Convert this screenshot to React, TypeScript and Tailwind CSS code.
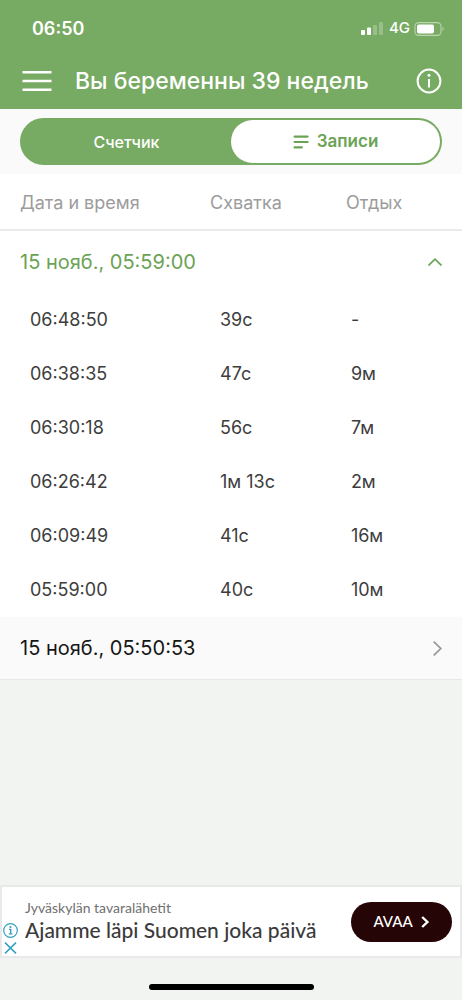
import { useState } from "react";
import clsx from "clsx";

interface Contraction {
  time: string;
  duration: string;
  rest: string;
}

interface Session {
  title: string;
  contractions: Contraction[];
}

const SESSIONS: Session[] = [
  {
    title: "15 нояб., 05:59:00",
    contractions: [
      { time: "06:48:50", duration: "39с", rest: "-" },
      { time: "06:38:35", duration: "47с", rest: "9м" },
      { time: "06:30:18", duration: "56с", rest: "7м" },
      { time: "06:26:42", duration: "1м 13с", rest: "2м" },
      { time: "06:09:49", duration: "41с", rest: "16м" },
      { time: "05:59:00", duration: "40с", rest: "10м" },
    ],
  },
  { title: "15 нояб., 05:50:53", contractions: [] },
];

function StatusBar() {
  return (
    <div className="flex h-14 items-center justify-between pl-8 pr-[18px] pt-px text-white">
      <span className="text-lg font-semibold">06:50</span>
      <div className="flex items-center gap-1">
        <svg width="22" height="13" viewBox="0 0 22 13" fill="currentColor">
          <rect x="0" y="8" width="4" height="5" rx="1" />
          <rect x="6" y="5.5" width="4" height="7.5" rx="1" />
          <rect x="12" y="3" width="4" height="10" rx="1" opacity="0.25" />
          <rect x="18" y="0" width="4" height="13" rx="1" opacity="0.25" />
        </svg>
        <span className="ml-0.5 text-[15px] font-medium">4G</span>
        <svg width="30" height="14" viewBox="0 0 30 14" fill="none">
          <rect x="1" y="0.6" width="26" height="12.8" rx="3.6" stroke="white" strokeWidth="1.1" opacity="0.5" />
          <rect x="3" y="2.5" width="17" height="9" rx="1.8" fill="white" />
          <path d="M28.6 4.8c1.4.6 1.4 3.8 0 4.4z" fill="white" opacity="0.5" />
        </svg>
      </div>
    </div>
  );
}

function Header() {
  return (
    <header className="bg-[#77aa62]">
      <StatusBar />
      <div className="flex h-[53px] items-center px-5 pb-1 text-white">
        <button type="button" aria-label="Меню" className="w-8">
          <svg width="32" height="22" viewBox="0 0 32 22" stroke="currentColor" strokeWidth="2.6">
            <path d="M2.5 2.3h29M2.5 11h29M2.5 19.7h29" />
          </svg>
        </button>
        <h1 className="ml-[23px] flex-1 whitespace-nowrap text-[23px] font-medium leading-8">
          Вы беременны 39 недель
        </h1>
        <button type="button" aria-label="Информация">
          <svg width="26" height="26" viewBox="0 0 26 26" fill="none" stroke="currentColor">
            <circle cx="13" cy="13" r="11.4" strokeWidth="2" />
            <path d="M13 11v8.6" strokeWidth="2" />
            <circle cx="13" cy="7.2" r="1.5" fill="currentColor" stroke="none" />
          </svg>
        </button>
      </div>
    </header>
  );
}

function Tabs() {
  return (
    <nav className="bg-[#fafafb] px-5 py-[9px]">
      <div className="flex h-[47px] rounded-full bg-[#77aa62] p-0.5">
        <button type="button" className="flex-1 text-base font-medium text-white">
          Счетчик
        </button>
        <button
          type="button"
          className="flex flex-1 items-center justify-center gap-2 rounded-full bg-white text-[17px] font-semibold text-[#6ba356]"
        >
          <svg width="16" height="14" viewBox="0 0 16 14" stroke="currentColor" strokeWidth="2.2" strokeLinecap="round">
            <path d="M1.6 1.6h13M1.6 7h13M1.6 12.4h7.2" />
          </svg>
          Записи
        </button>
      </div>
    </nav>
  );
}

function SessionRows({ session, initiallyOpen }: { session: Session; initiallyOpen: boolean }) {
  const [open, setOpen] = useState(initiallyOpen);

  return (
    <tbody className={clsx(open ? "bg-white" : "border-b border-[#e6e9e6] bg-[#fafafa]")}>
      <tr>
        <td colSpan={3}>
          <button
            type="button"
            aria-expanded={open}
            onClick={() => setOpen((o) => !o)}
            className={clsx(
              "flex h-[62px] w-full items-center justify-between px-5 text-xl",
              open ? "text-[#6ba356]" : "text-[#161616]",
            )}
          >
            {session.title}
            {open ? (
              <svg width="14" height="8" viewBox="0 0 14 8" fill="none" stroke="currentColor" strokeWidth="1.7">
                <path d="M0.5 7.5L7 1.2l6.5 6.3" />
              </svg>
            ) : (
              <svg width="9" height="15" viewBox="0 0 9 15" fill="none" stroke="#969696" strokeWidth="1.7">
                <path d="M0.7 0.7L7.8 7.5l-7.1 6.8" />
              </svg>
            )}
          </button>
        </td>
      </tr>
      {open &&
        session.contractions.map((c) => (
          <tr key={c.time} className="h-[54px] text-lg text-[#3d3d3d]">
            <td className="pl-[30px]">{c.time}</td>
            <td className="pl-2.5">{c.duration}</td>
            <td className="pl-[5px]">{c.rest}</td>
          </tr>
        ))}
    </tbody>
  );
}

function Records() {
  return (
    <table className="w-full table-fixed border-collapse text-left">
      <thead className="border-b-2 border-[#eaeaea] bg-white">
        <tr className="h-14 text-lg text-[#9c9c9c]">
          <th className="w-5/11 pl-5 pt-0.5 font-normal">Дата и время</th>
          <th className="w-5/17 pt-0.5 font-normal">Схватка</th>
          <th className="pt-0.5 font-normal">Отдых</th>
        </tr>
      </thead>
      {SESSIONS.map((s, i) => (
        <SessionRows key={s.title} session={s} initiallyOpen={i === 0} />
      ))}
    </table>
  );
}

function AdBanner() {
  return (
    <aside className="flex h-[73px] items-center justify-between border-2 border-[#e8e9e8] bg-white pr-2 font-['Lato',sans-serif]">
      <div className="flex h-full items-end gap-1.5">
        <div className="flex w-[17px] flex-col items-center gap-1 pb-0.5 text-[#35a0bf]">
          <button type="button" aria-label="Tietoja mainoksesta">
            <svg width="15" height="15" viewBox="0 0 15 15" fill="none" stroke="currentColor">
              <circle cx="7.5" cy="7.5" r="6.8" strokeWidth="1.2" />
              <path d="M6 6.4h1.7v4.4M5.8 10.9h3.6" strokeWidth="1.4" />
              <circle cx="7.4" cy="4" r="1.1" fill="currentColor" stroke="none" />
            </svg>
          </button>
          <button type="button" aria-label="Sulje mainos">
            <svg width="13" height="12" viewBox="0 0 13 12" stroke="currentColor" strokeWidth="1.5">
              <path d="M1 0.6l11 10.8M12 0.6L1 11.4" />
            </svg>
          </button>
        </div>
        <div className="whitespace-nowrap pb-3.5">
          <p className="text-sm leading-5 text-[#6f6f6f]">Jyväskylän tavaralähetit</p>
          <p className="text-[21px] font-medium leading-6 text-[#3b3b3b]">Ajamme läpi Suomen joka päivä</p>
        </div>
      </div>
      <a
        href="#avaa"
        className="flex h-10 w-[101px] items-center justify-center gap-2 rounded-full bg-[#260506] text-[15px] font-medium text-white"
      >
        AVAA
        <svg width="9" height="12" viewBox="0 0 9 12" fill="none" stroke="currentColor" strokeWidth="2.4">
          <path d="M1.2 1l5.2 5-5.2 5" />
        </svg>
      </a>
    </aside>
  );
}

export default function App() {
  return (
    <div className="flex min-h-screen flex-col bg-[#f2f4f1] font-['Inter',sans-serif]">
      <Header />
      <main>
        <Tabs />
        <Records />
      </main>
      <footer className="mt-auto">
        <AdBanner />
        <div className="flex h-[42px] items-end justify-center pb-2.5">
          <div className="h-1.5 w-5/14 rounded-full bg-black" />
        </div>
      </footer>
    </div>
  );
}
